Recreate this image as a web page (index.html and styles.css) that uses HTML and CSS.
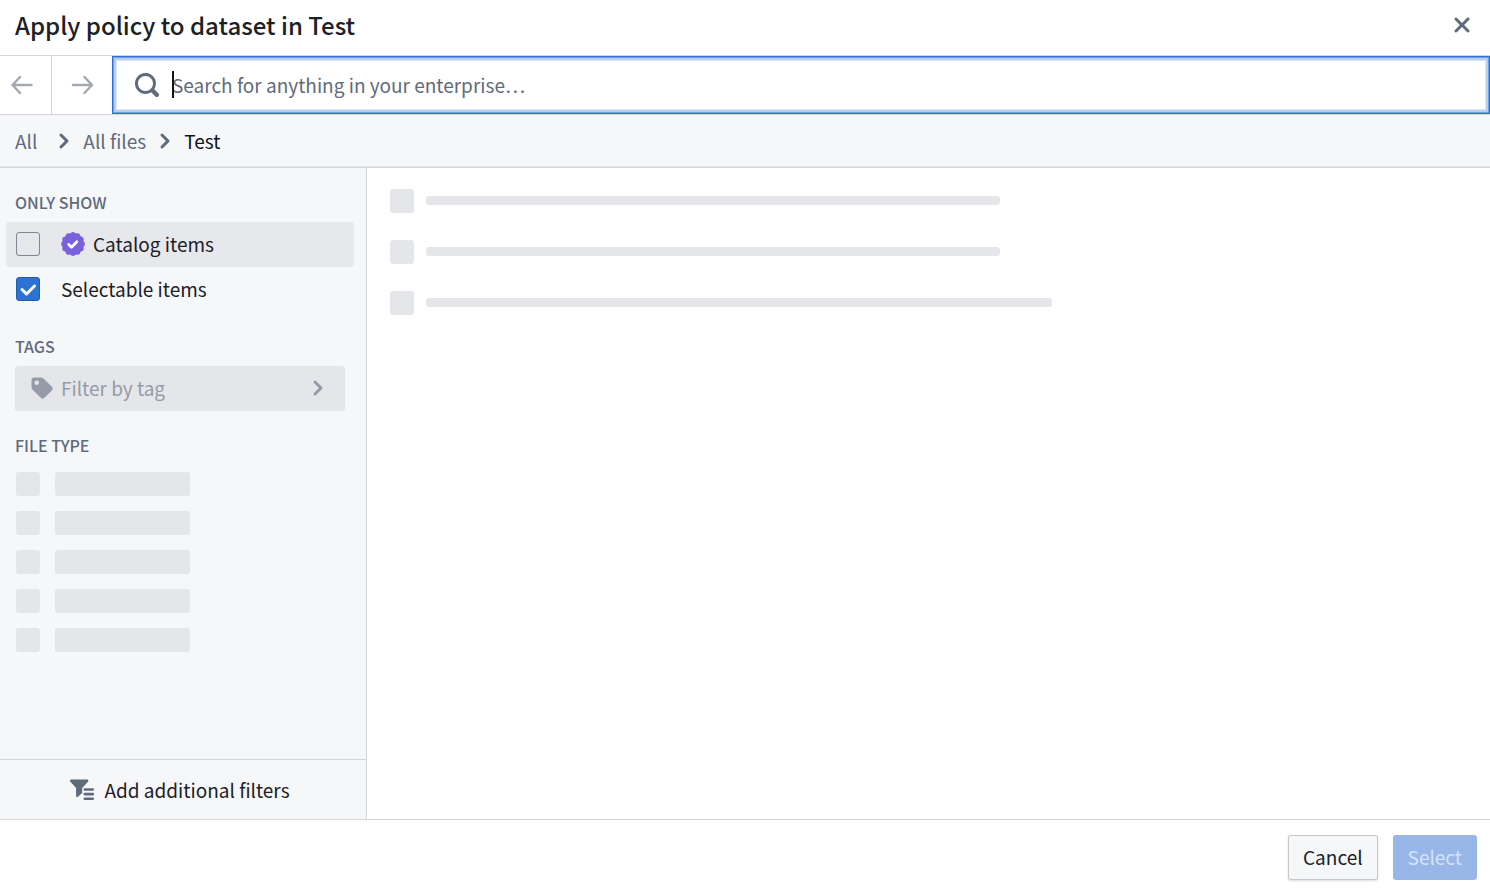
FILE: index.html
```html
<!DOCTYPE html>
<html lang="en">
<head>
<meta charset="utf-8">
<meta name="viewport" content="width=device-width, initial-scale=1">
<title>Apply policy to dataset in Test</title>
<link rel="stylesheet" href="styles.css">
</head>
<body>
<svg class="symbols" aria-hidden="true">
  <symbol id="chevron" viewBox="0 0 16 16"><path d="M10.71 7.29l-4-4a1.003 1.003 0 00-1.42 1.42L8.59 8 5.3 11.29c-.19.18-.3.43-.3.71a1.003 1.003 0 001.71.71l4-4c.18-.18.29-.43.29-.71 0-.28-.11-.53-.29-.71z"/></symbol>
</svg>
<div class="dialog" role="dialog" aria-labelledby="dialog-title">
  <header class="header">
    <h1 class="title" id="dialog-title">Apply policy to dataset in Test</h1>
    <button class="close" type="button" aria-label="Close">
      <svg class="icon" viewBox="0 0 16 16"><path d="M9.41 8l3.29-3.29c.19-.18.3-.43.3-.71a1.003 1.003 0 00-1.71-.71L8 6.59l-3.29-3.3a1.003 1.003 0 00-1.42 1.42L6.59 8 3.3 11.29c-.19.18-.3.43-.3.71a1.003 1.003 0 001.71.71L8 9.41l3.29 3.29c.18.19.43.3.71.3a1.003 1.003 0 00.71-1.71L9.41 8z"/></svg>
    </button>
  </header>

  <div class="toolbar">
    <button class="nav-button nav-back" type="button" aria-label="Back" disabled>
      <svg class="icon icon-stroke" viewBox="0 0 24 24"><path d="M21.500 12H3M10 4L2.500 12l7.500 8"/></svg>
    </button>
    <button class="nav-button nav-forward" type="button" aria-label="Forward" disabled>
      <svg class="icon icon-stroke" viewBox="0 0 24 24"><path d="M3 12h18.500M14.500 4l7.500 8-7.500 8"/></svg>
    </button>
    <div class="search">
      <svg class="icon" viewBox="0 0 16 16"><path d="M15.55 13.43l-2.67-2.68a6.94 6.94 0 001.11-3.76c0-3.87-3.13-7-7-7s-7 3.13-7 7 3.13 7 7 7c1.39 0 2.68-.42 3.76-1.11l2.68 2.67a1.498 1.498 0 102.12-2.12zm-8.56-1.44c-2.76 0-5-2.24-5-5s2.24-5 5-5 5 2.24 5 5-2.24 5-5 5z"/></svg>
      <div class="search-field">
        <input class="search-input" type="text" aria-label="Search" placeholder="Search for anything in your enterprise…">
        <span class="caret"></span>
      </div>
    </div>
  </div>

  <nav class="breadcrumbs" aria-label="Breadcrumb">
    <a class="crumb crumb-root" href="#all">All</a>
    <svg class="icon" aria-hidden="true"><use href="#chevron"/></svg>
    <a class="crumb" href="#files">All files</a>
    <svg class="icon" aria-hidden="true"><use href="#chevron"/></svg>
    <span class="crumb crumb-current" aria-current="page">Test</span>
  </nav>

  <div class="content">
    <aside class="sidebar">
      <div class="filters">
        <section>
          <h2 class="heading">ONLY SHOW</h2>
          <label class="option option-hover">
            <span class="check"><input class="checkbox" type="checkbox"><svg class="tick" viewBox="0 0 24 24"><path d="M6 12.500l4.500 4.500L18.500 9"/></svg></span>
            <svg class="badge" viewBox="0 0 24 24"><circle class="badge-fill" cx="12" cy="12" r="11"/><path class="badge-edge" d="M21.400 12h0M20.140 16.700h0M16.700 20.140h0M12 21.400h0M7.300 20.140h0M3.860 16.700h0M2.600 12h0M3.860 7.300h0M7.300 3.860h0M12 2.600h0M16.700 3.860h0M20.140 7.300h0"/><path class="badge-tick" d="M7.700 12.500l2.800 2.700 5.400-5.400"/></svg>
            <span>Catalog items</span>
          </label>
          <label class="option">
            <span class="check"><input class="checkbox" type="checkbox" checked><svg class="tick" viewBox="0 0 24 24"><path d="M6 12.500l4.500 4.500L18.500 9"/></svg></span>
            <span>Selectable items</span>
          </label>
        </section>
        <section>
          <h2 class="heading">TAGS</h2>
          <button class="tag-filter" type="button" disabled>
            <svg class="icon" viewBox="0 0 16 16"><path fill-rule="evenodd" d="M1 3a2 2 0 012-2h4.584a2 2 0 011.414.586l5.413 5.412a2 2 0 010 2.829L9.827 14.410a2 2 0 01-2.829 0L1.586 8.998A2 2 0 011 7.584V3zm3.487-.007a1.495 1.495 0 100 2.990 1.495 1.495 0 000-2.990z"/></svg>
            <span class="tag-label">Filter by tag</span>
            <svg class="icon" aria-hidden="true"><use href="#chevron"/></svg>
          </button>
        </section>
        <section>
          <h2 class="heading">FILE TYPE</h2>
          <div class="type-list">
            <div class="type-row"><span class="bone bone-box"></span><span class="bone bone-label"></span></div>
            <div class="type-row"><span class="bone bone-box"></span><span class="bone bone-label"></span></div>
            <div class="type-row"><span class="bone bone-box"></span><span class="bone bone-label"></span></div>
            <div class="type-row"><span class="bone bone-box"></span><span class="bone bone-label"></span></div>
            <div class="type-row"><span class="bone bone-box"></span><span class="bone bone-label"></span></div>
          </div>
        </section>
      </div>
      <button class="add-filters" type="button">
        <svg class="icon" viewBox="0 0 24 24"><path d="M1.200 1.500h16c1.300 0 1.600 1.300.8 2.200l-5.800 6.200v5.200l-4.200 3.700c-.9.700-1.900.3-1.900-.8V9.900L.4 3.700C-.4 2.800 0 1.500 1.200 1.500z"/><path d="M14.800 10.200h8a1.300 1.300 0 010 2.600h-8a1.300 1.300 0 010-2.600zM14.800 14.800h8a1.300 1.300 0 010 2.600h-8a1.300 1.300 0 010-2.600zM14.800 19.400h8a1.300 1.300 0 010 2.600h-8a1.300 1.300 0 010-2.600z"/></svg>
        <span>Add additional filters</span>
      </button>
    </aside>
    <main class="results" aria-busy="true">
      <div class="result"><span class="bone bone-box"></span><span class="result-track"><span class="bone bone-line"></span></span></div>
      <div class="result"><span class="bone bone-box"></span><span class="result-track"><span class="bone bone-line"></span></span></div>
      <div class="result"><span class="bone bone-box"></span><span class="result-track"><span class="bone bone-line bone-line-long"></span></span></div>
    </main>
  </div>

  <footer class="footer">
    <button class="button" type="button">Cancel</button>
    <button class="button button-primary" type="button" disabled>Select</button>
  </footer>
</div>
</body>
</html>
```
FILE: styles.css
```css
:root {
  --text: #1c2127;
  --muted: #5f6b7c;
  --disabled: #959ca8;
  --line: #d3d5d9;
  --panel: #f6f7f9;
  --bone: #e5e6e9;
  --blue: #2d72d2;
}

* { box-sizing: border-box; }

body {
  margin: 0;
  background: #fff;
  color: var(--text);
  font-family: "Noto Sans CJK SC", "Noto Sans", sans-serif;
  font-size: 19px;
  line-height: 28px;
}

button, input { font: inherit; color: inherit; }
button { margin: 0; padding: 0; border: 0; background: none; }

.symbols { display: none; }

.icon {
  flex: none;
  width: 24px;
  height: 24px;
  fill: currentColor;
}

.icon-stroke {
  fill: none;
  stroke: currentColor;
  stroke-width: 2.5;
  stroke-linecap: round;
  stroke-linejoin: round;
}

.dialog {
  display: flex;
  flex-direction: column;
  min-height: 100vh;
}

.header {
  display: flex;
  align-items: center;
  justify-content: space-between;
  padding: 9px 16px 14px 15px;
  border-bottom: 1px solid var(--line);
}

.title {
  margin: 0;
  font-size: 24px;
  font-weight: 500;
  line-height: 32px;
}

.close { display: flex; color: var(--muted); }

.toolbar {
  display: flex;
  height: 59px;
  border-bottom: 1px solid var(--line);
}

.nav-button {
  display: flex;
  align-items: center;
  color: #a3a8b2;
}

.nav-back { width: 52px; padding-left: 10px; border-right: 1px solid var(--line); }
.nav-forward { width: 60px; padding-left: 18px; }

.search {
  display: flex;
  flex: 1;
  align-items: center;
  gap: 13px;
  padding: 0 23px;
  color: var(--muted);
  box-shadow: inset 0 0 0 1px var(--blue), inset 0 0 0 2px #6f9fe0, inset 0 0 0 4px #b9ceef, inset 0 0 0 5px #dfe8f7;
}

.search-field {
  position: relative;
  display: flex;
  flex: 1;
}

.search-input {
  width: 100%;
  padding: 0;
  border: 0;
  outline: 0;
  background: none;
  line-height: 28px;
}

.search-input::placeholder { color: var(--muted); opacity: 1; }

.caret {
  position: absolute;
  top: 0;
  left: 0;
  width: 2px;
  height: 27px;
  background: #111418;
}

.breadcrumbs {
  display: flex;
  align-items: center;
  gap: 7px;
  padding: 12px 15px;
  border-bottom: 1px solid var(--line);
  background: var(--panel);
  box-shadow: inset 0 -1px #e4e6e9;
  color: var(--muted);
}

.crumb { color: var(--muted); text-decoration: none; }
.crumb-root { margin-right: 8px; }
.crumb-current { color: #111418; }

.content { display: flex; flex: 1; }

.sidebar {
  display: flex;
  flex: none;
  flex-direction: column;
  width: 367px;
  border-right: 1px solid var(--line);
  background: var(--panel);
}

.filters {
  display: flex;
  flex: 1;
  flex-direction: column;
  gap: 22px;
  padding: 22px 12px 22px 6px;
}

.heading {
  margin: 0 0 8px 9px;
  color: var(--muted);
  font-size: 16px;
  font-weight: 500;
  line-height: 24px;
}

.option {
  display: flex;
  align-items: center;
  gap: 8px;
  height: 45px;
  padding: 0 0 2px 10px;
  border-radius: 3px;
}

.option-hover { background: #e7e8ec; }

.check { display: grid; margin-right: 13px; }
.checkbox, .tick { grid-area: 1 / 1; width: 24px; height: 24px; }

.checkbox {
  margin: 0;
  border: 1px solid #7d8795;
  border-radius: 3px;
  appearance: none;
}

.checkbox:checked { border-color: #215db0; background: var(--blue); }

.tick {
  fill: none;
  stroke: #fff;
  stroke-width: 3;
  stroke-linecap: round;
  stroke-linejoin: round;
  pointer-events: none;
  visibility: hidden;
}

.checkbox:checked + .tick { visibility: visible; }

.badge { width: 24px; height: 24px; fill: none; stroke-linecap: round; stroke-linejoin: round; }
.badge-fill { fill: #7961db; }
.badge-edge { stroke: #7961db; stroke-width: 5; }
.badge-tick { stroke: #fff; stroke-width: 2.8; }

.tag-filter {
  display: flex;
  align-items: center;
  gap: 7px;
  width: 330px;
  height: 45px;
  margin-left: 9px;
  padding: 0 15px 2px;
  border-radius: 3px;
  background: var(--bone);
  color: var(--disabled);
}

.tag-label { flex: 1; text-align: left; }

.type-list {
  display: flex;
  flex-direction: column;
  gap: 15px;
  padding: 7px 0 0 10px;
}

.type-row { display: flex; gap: 15px; }

.bone { border-radius: 3px; background: var(--bone); }
.bone-box { flex: none; width: 24px; height: 24px; }
.bone-label { width: 135px; height: 24px; }
.bone-line { display: block; width: 55%; height: 9px; }
.bone-line-long { width: 60%; }

.add-filters {
  display: flex;
  align-items: center;
  justify-content: center;
  gap: 10px;
  height: 60px;
  padding-right: 6px;
  border-top: 1px solid var(--line);
}

.add-filters .icon { color: var(--muted); }

.results {
  display: flex;
  flex: 1;
  flex-direction: column;
  gap: 27px;
  padding: 21px 20px 21px 23px;
}

.result { display: flex; gap: 12px; }
.result-track { flex: 1; padding-top: 7px; }

.footer {
  display: flex;
  justify-content: flex-end;
  gap: 15px;
  padding: 15px 13px 12px;
  border-top: 1px solid var(--line);
}

.button {
  height: 45px;
  padding: 0 15px 2px;
  border-radius: 3px;
  background: var(--panel);
  box-shadow: inset 0 0 0 1px #c6c8cc, 0 1px 2px rgba(17, 20, 24, 0.15);
}

.button-primary {
  background: #99b6e9;
  box-shadow: none;
  color: #d6e2f7;
}
```
